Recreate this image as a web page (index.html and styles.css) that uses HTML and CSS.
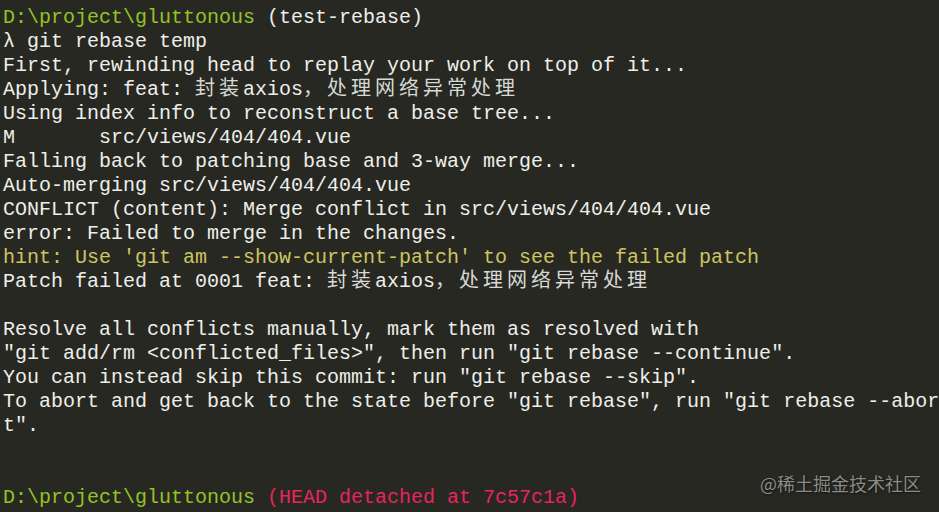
FILE: index.html
```html
<!DOCTYPE html>
<html>
<head>
<meta charset="utf-8">
<link rel="stylesheet" href="styles.css">
</head>
<body>
<div class="term">
<div class="ln"><span class="g">D:\project\gluttonous</span> (test-rebase)</div>
<div class="ln">λ git rebase temp</div>
<div class="ln">First, rewinding head to replay your work on top of it...</div>
<div class="ln">Applying: feat: <span class="cjk">封装</span>axios<span class="cjk">，处理网络异常处理</span></div>
<div class="ln">Using index info to reconstruct a base tree...</div>
<div class="ln">M       src/views/404/404.vue</div>
<div class="ln">Falling back to patching base and 3-way merge...</div>
<div class="ln">Auto-merging src/views/404/404.vue</div>
<div class="ln">CONFLICT (content): Merge conflict in src/views/404/404.vue</div>
<div class="ln">error: Failed to merge in the changes.</div>
<div class="ln y">hint: Use 'git am --show-current-patch' to see the failed patch</div>
<div class="ln">Patch failed at 0001 feat: <span class="cjk">封装</span>axios<span class="cjk">，处理网络异常处理</span></div>
<div class="ln"> </div>
<div class="ln">Resolve all conflicts manually, mark them as resolved with</div>
<div class="ln">"git add/rm &lt;conflicted_files&gt;", then run "git rebase --continue".</div>
<div class="ln">You can instead skip this commit: run "git rebase --skip".</div>
<div class="ln">To abort and get back to the state before "git rebase", run "git rebase --abor</div>
<div class="ln">t".</div>
<div class="ln"> </div>
<div class="ln"> </div>
<div class="ln"><span class="g">D:\project\gluttonous</span> <span class="r">(HEAD detached at 7c57c1a)</span></div>
</div>
<div class="wm">@稀土掘金技术社区</div>
</body>
</html>
```
FILE: styles.css
```css
html, body {
  margin: 0;
  padding: 0;
  background: #272822;
  width: 939px;
  height: 512px;
  overflow: hidden;
}
.term {
  padding: 6px 0 0 3px;
  font-family: "Liberation Mono", "Noto Sans CJK SC", monospace;
  font-size: 20px;
  line-height: 24px;
  color: #eeeeea;
}
.ln {
  white-space: pre;
  height: 24px;
}
.g { color: #95c327; }
.y { color: #cfc463; }
.r { color: #e8245c; }
.cjk {
  font-family: "Noto Sans CJK SC", sans-serif;
  letter-spacing: 4px;
  line-height: 0;
  color: #d8d8d4;
}
.wm {
  position: absolute;
  left: 760px;
  top: 471px;
  font-family: "Noto Sans CJK SC", sans-serif;
  font-size: 18px;
  line-height: 24px;
  color: #8a8a86;
  text-shadow: 1px 1px 2px rgba(0,0,0,0.6);
}
```
